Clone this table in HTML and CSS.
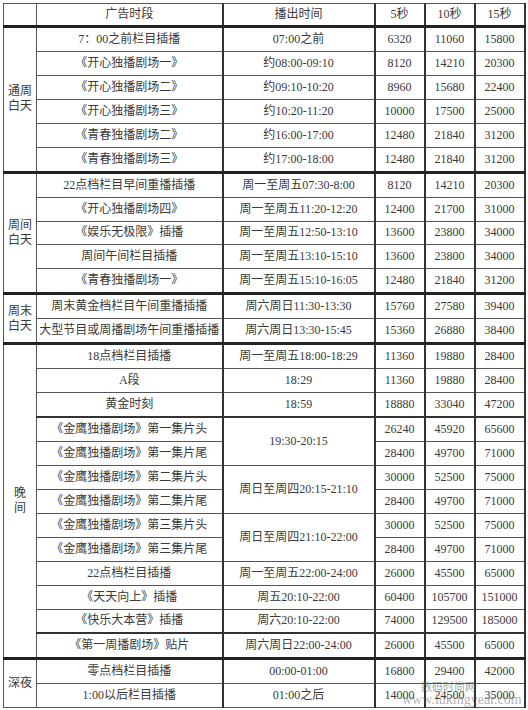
FILE: index.html
```html
<!DOCTYPE html>
<html lang="zh-CN">
<head>
<meta charset="utf-8">
<title>广告价格表</title>
<link rel="stylesheet" href="styles.css">
</head>
<body>
<div class="page">
<table class="rates">
<colgroup>
<col class="c-grp"><col class="c-name"><col class="c-time"><col class="c-p"><col class="c-p"><col class="c-p">
</colgroup>
<tr class="head">
<td class="grp"></td><td>广告时段</td><td class="tm">播出时间</td><td class="pr">5秒</td><td class="pr">10秒</td><td class="pr">15秒</td>
</tr>
<tr class="sep">
<td class="grp" rowspan="6">通周<br>白天</td><td>7：00之前栏目插播</td><td class="tm">07:00之前</td><td class="pr">6320</td><td class="pr">11060</td><td class="pr">15800</td>
</tr>
<tr><td>《开心独播剧场一》</td><td class="tm">约08:00-09:10</td><td class="pr">8120</td><td class="pr">14210</td><td class="pr">20300</td></tr>
<tr><td>《开心独播剧场二》</td><td class="tm">约09:10-10:20</td><td class="pr">8960</td><td class="pr">15680</td><td class="pr">22400</td></tr>
<tr><td>《开心独播剧场三》</td><td class="tm">约10:20-11:20</td><td class="pr">10000</td><td class="pr">17500</td><td class="pr">25000</td></tr>
<tr><td>《青春独播剧场二》</td><td class="tm">约16:00-17:00</td><td class="pr">12480</td><td class="pr">21840</td><td class="pr">31200</td></tr>
<tr><td>《青春独播剧场三》</td><td class="tm">约17:00-18:00</td><td class="pr">12480</td><td class="pr">21840</td><td class="pr">31200</td></tr>
<tr class="sep">
<td class="grp" rowspan="5">周间<br>白天</td><td>22点档栏目早间重播插播</td><td class="tm">周一至周五07:30-8:00</td><td class="pr">8120</td><td class="pr">14210</td><td class="pr">20300</td>
</tr>
<tr><td>《开心独播剧场四》</td><td class="tm">周一至周五11:20-12:20</td><td class="pr">12400</td><td class="pr">21700</td><td class="pr">31000</td></tr>
<tr><td>《娱乐无极限》插播</td><td class="tm">周一至周五12:50-13:10</td><td class="pr">13600</td><td class="pr">23800</td><td class="pr">34000</td></tr>
<tr><td>周间午间栏目插播</td><td class="tm">周一至周五13:10-15:10</td><td class="pr">13600</td><td class="pr">23800</td><td class="pr">34000</td></tr>
<tr><td>《青春独播剧场一》</td><td class="tm">周一至周五15:10-16:05</td><td class="pr">12480</td><td class="pr">21840</td><td class="pr">31200</td></tr>
<tr class="sep">
<td class="grp" rowspan="2">周末<br>白天</td><td>周末黄金档栏目午间重播插播</td><td class="tm">周六周日11:30-13:30</td><td class="pr">15760</td><td class="pr">27580</td><td class="pr">39400</td>
</tr>
<tr><td>大型节目或周播剧场午间重播插播</td><td class="tm">周六周日13:30-15:45</td><td class="pr">15360</td><td class="pr">26880</td><td class="pr">38400</td></tr>
<tr class="sep">
<td class="grp" rowspan="13">晚<br>间</td><td>18点档栏目插播</td><td class="tm">周一至周五18:00-18:29</td><td class="pr">11360</td><td class="pr">19880</td><td class="pr">28400</td>
</tr>
<tr><td>A段</td><td class="tm">18:29</td><td class="pr">11360</td><td class="pr">19880</td><td class="pr">28400</td></tr>
<tr><td>黄金时刻</td><td class="tm">18:59</td><td class="pr">18880</td><td class="pr">33040</td><td class="pr">47200</td></tr>
<tr class="mid"><td>《金鹰独播剧场》第一集片头</td><td class="tm" rowspan="2">19:30-20:15</td><td class="pr">26240</td><td class="pr">45920</td><td class="pr">65600</td></tr>
<tr><td>《金鹰独播剧场》第一集片尾</td><td class="pr">28400</td><td class="pr">49700</td><td class="pr">71000</td></tr>
<tr><td>《金鹰独播剧场》第二集片头</td><td class="tm" rowspan="2">周日至周四20:15-21:10</td><td class="pr">30000</td><td class="pr">52500</td><td class="pr">75000</td></tr>
<tr><td>《金鹰独播剧场》第二集片尾</td><td class="pr">28400</td><td class="pr">49700</td><td class="pr">71000</td></tr>
<tr><td>《金鹰独播剧场》第三集片头</td><td class="tm" rowspan="2">周日至周四21:10-22:00</td><td class="pr">30000</td><td class="pr">52500</td><td class="pr">75000</td></tr>
<tr><td>《金鹰独播剧场》第三集片尾</td><td class="pr">28400</td><td class="pr">49700</td><td class="pr">71000</td></tr>
<tr><td>22点档栏目插播</td><td class="tm">周一至周五22:00-24:00</td><td class="pr">26000</td><td class="pr">45500</td><td class="pr">65000</td></tr>
<tr><td>《天天向上》插播</td><td class="tm">周五20:10-22:00</td><td class="pr">60400</td><td class="pr">105700</td><td class="pr">151000</td></tr>
<tr><td>《快乐大本营》插播</td><td class="tm">周六20:10-22:00</td><td class="pr">74000</td><td class="pr">129500</td><td class="pr">185000</td></tr>
<tr class="mid"><td>《第一周播剧场》贴片</td><td class="tm">周六周日22:00-24:00</td><td class="pr">26000</td><td class="pr">45500</td><td class="pr">65000</td></tr>
<tr class="sep">
<td class="grp" rowspan="2">深夜</td><td>零点档栏目插播</td><td class="tm">00:00-01:00</td><td class="pr">16800</td><td class="pr">29400</td><td class="pr">42000</td>
</tr>
<tr><td>1:00以后栏目插播</td><td class="tm">01:00之后</td><td class="pr">14000</td><td class="pr">24500</td><td class="pr">35000</td></tr>
</table>
<span class="mark-cn">数码时尚网</span>
<span class="mark-url">www.lukingyear.com</span>
</div>
</body>
</html>
```
FILE: styles.css
```css
html, body {
  margin: 0;
  padding: 0;
  background: #ffffff;
}
body {
  font-family: "Liberation Serif", "Noto Sans CJK SC", serif;
  font-size: 12px;
  color: #3a3a3a;
}
.page {
  position: relative;
  width: 528px;
  height: 710px;
  padding: 3px 0 0 3px;
  box-sizing: border-box;
  overflow: hidden;
}
.rates {
  border-collapse: collapse;
  table-layout: fixed;
  width: 522px;
}
.c-grp { width: 33px; }
.c-name { width: 186px; }
.c-time { width: 152px; }
.c-p { width: 50px; }
.rates td {
  border: 1px solid #555;
  text-align: center;
  vertical-align: middle;
  padding: 0;
  height: 22.95px;
  white-space: nowrap;
  line-height: 15px;
}
.rates .head td {
  height: 21px;
}
.rates td.tm {
  border-left: 2px solid #333;
}
.rates td.pr {
  border-left: 2px solid #333;
  border-right: 2px solid #333;
}
.rates td.grp {
  border-left: 1px solid #555;
  border-right: 1px solid #555;
}
.rates tr.sep td {
  border-top: 3px solid #222;
}
.rates tr.mid td {
  border-top: 2px solid #333;
}
.mark-cn {
  position: absolute;
  left: 421px;
  top: 680px;
  font-family: "Noto Sans CJK SC", sans-serif;
  font-size: 11px;
  line-height: 12px;
  color: rgba(80, 80, 80, 0.55);
}
.mark-url {
  position: absolute;
  left: 402px;
  top: 693px;
  font-family: "Liberation Serif", serif;
  font-size: 14px;
  line-height: 14px;
  color: rgba(80, 80, 80, 0.45);
}
```
